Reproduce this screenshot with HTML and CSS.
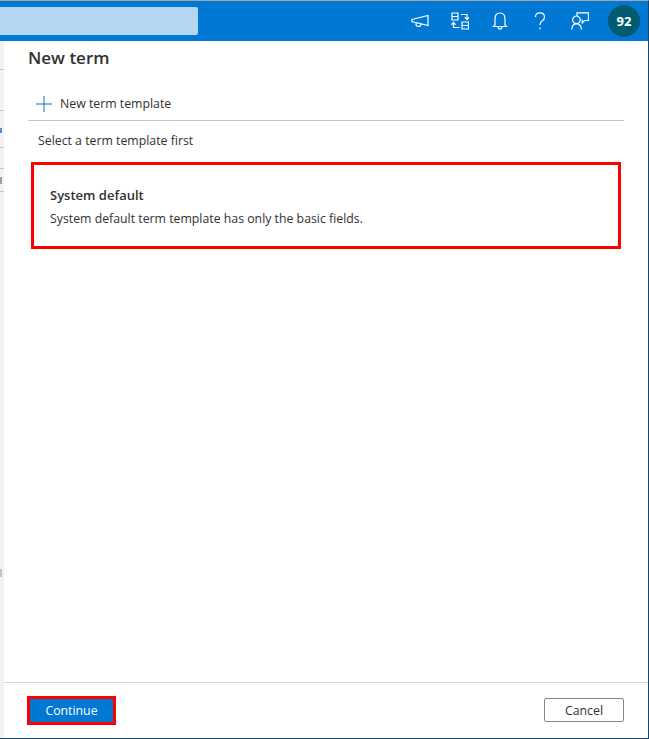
FILE: index.html
```html
<!DOCTYPE html>
<html lang="en">
<head>
    <meta charset="UTF-8">
    <meta name="viewport" content="width=device-width, initial-scale=1.0">
    <title>New term</title>
    <link rel="stylesheet" href="styles.css">
</head>
<body>

<div class="window">
    <header class="topbar">
        <div class="search"></div>
        <div class="top-icons">
            <svg class="top-icon" viewBox="0 0 18 18"><path d="M0.8 7.5 L17 3.5 V13.5 L0.8 9.5 Z M5 11 Q4.5 14.5 7.5 14.5 Q9.5 14.5 10 12.3"/></svg>
            <svg class="top-icon" viewBox="0 0 18 18"><path d="M1 1 H7 V8 H1 Z M1 4.5 H7 M11 10 H17.5 V17 H11 Z M11 13.5 H17.5 M10 2.5 H16 V7 M13.8 5.2 L16 7.6 L18 5.2 M8.5 15.5 H2.5 V11 M0.4 12.8 L2.5 10.4 L4.7 12.8"/></svg>
            <svg class="top-icon" viewBox="0 0 18 18"><path d="M4 13 V7 Q4 1 9 1 Q14 1 14 7 V13 L15.5 14.5 H2.5 Z M7 14.5 Q7 17 9 17 Q11 17 11 14.5"/></svg>
            <svg class="top-icon" viewBox="0 0 18 18"><path d="M4.5 5 Q4.5 0.8 9 0.8 Q13.5 0.8 13.5 5 Q13.5 7.5 11 9 Q9 10.2 9 13 M9 15.5 V17.3"/></svg>
            <svg class="top-icon" viewBox="0 0 18 18"><path d="M6 4 V0.8 H17.5 V8.5 H13.5 L11.3 11 V7.5 M5.5 4 A3.8 3.8 0 1 1 5.4 4 M0.8 17.5 Q1 11.8 5.5 11.6 Q10 11.8 10.5 17.5"/></svg>
            <div class="avatar">92</div>
        </div>
    </header>

    <div class="body-row">
        <div class="behind">
            <span class="behind-line line-1"></span>
            <span class="behind-line line-2"></span>
            <span class="behind-mark mark-1"></span>
            <span class="behind-line line-3"></span>
            <span class="behind-line line-4"></span>
            <span class="behind-mark mark-2"></span>
            <span class="behind-line line-5"></span>
            <span class="behind-mark mark-3"></span>
        </div>

        <main class="panel">
            <div class="panel-top">
                <h1 class="panel-title">New term</h1>
                <div class="toolbar">
                    <svg class="plus" viewBox="0 0 16 16"><path d="M8 0 V16 M0 8 H16"/></svg>
                    <span>New term template</span>
                </div>
                <p class="hint">Select a term template first</p>
                <div class="template-card">
                    <h2 class="template-name">System default</h2>
                    <p class="template-desc">System default term template has only the basic fields.</p>
                </div>
            </div>
            <footer class="panel-footer">
                <button class="btn btn-primary">Continue</button>
                <button class="btn btn-cancel">Cancel</button>
            </footer>
        </main>
    </div>
</div>

</body>
</html>
```

FILE: styles.css
```css
html, body {
    height: 100%;
}
body {
    margin: 0;
    font-family: "Open Sans", "Noto Sans", sans-serif;
    color: #323130;
    background: white;
}
.window {
    height: 739px;
    box-sizing: border-box;
    display: flex;
    flex-direction: column;
    border-top: 1px solid #a6a6a6;
    border-right: 1px solid #17456b;
    border-bottom: 1px solid #17456b;
}
.topbar {
    height: 40px;
    flex-shrink: 0;
    background-color: #0078d4;
    display: flex;
    justify-content: space-between;
    align-items: center;
}
.search {
    width: 198px;
    height: 28px;
    background-color: #b3d6f2;
    border-radius: 0 2px 2px 0;
}
.top-icons {
    display: flex;
    align-items: center;
    gap: 22px;
    padding-right: 8px;
}
.top-icon {
    width: 18px;
    height: 18px;
    fill: none;
    stroke: white;
    stroke-width: 1.2;
}
.avatar {
    width: 32px;
    height: 32px;
    margin-left: -3px;
    border-radius: 50%;
    background-color: #005b70;
    color: white;
    font-size: 13px;
    font-weight: 700;
    line-height: 32px;
    text-align: center;
}
.body-row {
    flex: 1;
    display: flex;
    min-height: 0;
}
.behind {
    width: 4px;
    flex-shrink: 0;
    background-color: #f3f2f1;
    display: flex;
    flex-direction: column;
}
.behind-line {
    display: block;
    height: 1px;
    background-color: #c8c6c4;
}
.behind-mark {
    display: block;
    width: 2px;
}
.line-1 { margin-top: 28px; }
.line-2 { margin-top: 40px; }
.mark-1 { margin-top: 17px; height: 5px; background-color: #5c8fc9; }
.line-3 { margin-top: 14px; }
.line-4 { margin-top: 20px; }
.mark-2 { margin-top: 8px; height: 7px; background-color: #a19f9d; }
.line-5 { margin-top: 7px; }
.mark-3 { margin-top: 377px; height: 8px; background-color: #b9c6da; }
.panel {
    flex: 1;
    display: flex;
    flex-direction: column;
    justify-content: space-between;
    background: white;
}
.panel-top {
    padding: 7px 24px 0;
}
.panel-title {
    margin: 0;
    font-size: 17px;
    font-weight: 600;
    line-height: 20px;
}
.toolbar {
    display: flex;
    align-items: center;
    gap: 8px;
    height: 36px;
    margin-top: 17px;
    padding: 2px 0 0 8px;
    box-sizing: border-box;
    font-size: 12.3px;
    border-bottom: 1px solid #c8c6c4;
}
.plus {
    width: 16px;
    height: 16px;
    fill: none;
    stroke: #0078d4;
    stroke-width: 1;
}
.hint {
    margin: 11px 0 0 10px;
    font-size: 12.3px;
    line-height: 18px;
}
.template-card {
    box-sizing: border-box;
    width: 590px;
    height: 87px;
    margin: 12px 0 0 3px;
    padding: 21px 16px 0;
    border: 3px solid #ff0000;
}
.template-name {
    margin: 0;
    font-size: 13px;
    font-weight: 600;
    line-height: 18px;
}
.template-desc {
    margin: 7px 0 0;
    font-size: 12.3px;
    line-height: 16px;
}
.panel-footer {
    display: flex;
    justify-content: space-between;
    align-items: center;
    height: 55px;
    padding: 0 24px 0 23px;
    border-top: 1px solid #d6d6d6;
}
.btn {
    font-family: inherit;
    font-size: 12.3px;
    border-radius: 2px;
    box-sizing: border-box;
}
.btn-primary {
    width: 89px;
    height: 29px;
    color: white;
    background-color: #0078d4;
    border: 3px solid #ff0000;
    border-radius: 0;
}
.btn-cancel {
    width: 80px;
    height: 24px;
    margin-bottom: 2px;
    padding-top: 3px;
    color: #323130;
    background: white;
    border: 1px solid #8a8886;
}
```
